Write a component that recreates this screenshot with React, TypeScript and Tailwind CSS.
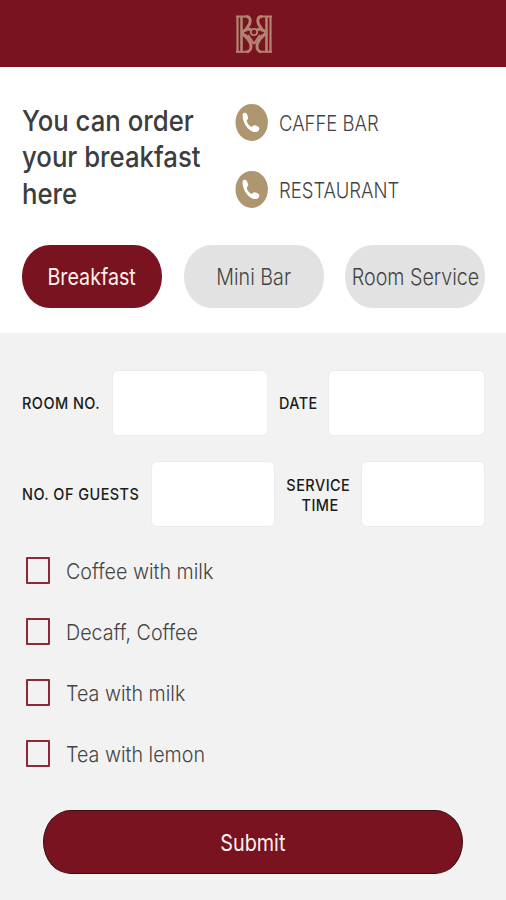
import { useState } from "react";

const contacts = ["CAFFE BAR", "RESTAURANT"];

const tabs = ["Breakfast", "Mini Bar", "Room Service"];

const drinks = ["Coffee with milk", "Decaff, Coffee", "Tea with milk", "Tea with lemon"];

const fieldClass =
  "h-[66px] min-w-0 rounded-[6px] border border-[#ececec] bg-white px-3 text-lg outline-none";

function MonogramHalf() {
  return (
    <>
      <path d="M0 1.500h11M0 36.700h13" strokeWidth="2" />
      <path d="M1.500 1v36.500" strokeWidth="2.200" />
      <path d="M5.500 1v36.500" strokeWidth="2.600" />
      <path d="M10 1.500c4.500 0 5 4 3.500 7.500L9 16" strokeWidth="3" />
      <path d="M6 17l5-3 4 .5M6 18l5 5" strokeWidth="3" />
      <path d="M9 20c3 4 6 7 6 11 0 3-1.500 5.700-4 5.700" strokeWidth="3" />
      <path d="M12 20l6 9" strokeWidth="2.200" />
    </>
  );
}

function Monogram() {
  return (
    <svg width="36" height="39" viewBox="0 0 36 39" fill="none" stroke="#b38472">
      <MonogramHalf />
      <g transform="matrix(-1 0 0 1 36 0)">
        <MonogramHalf />
      </g>
      <circle cx="18" cy="17" r="3.200" strokeWidth="1.800" />
    </svg>
  );
}

function PhoneIcon() {
  return (
    <svg width="33" height="38" viewBox="0 0 33 38" className="shrink-0">
      <ellipse cx="16.700" cy="19.400" rx="16.200" ry="18.500" fill="#ad9670" />
      <path
        d="M7.600 11.500c.2-1.500 1.600-2.200 2.900-1.700 1 .4 1.500 1.300 1.900 2.500l.7 2.300c.3 1.100 0 1.700-.7 2.200-.8.600-.8 1.200-.4 2.100.9 2 2.200 3.500 3.900 4.500.8.500 1.400.5 1.900-.3.600-.9 1.300-1.200 2.300-.8l2.600 1c1.100.5 1.700 1.300 1.600 2.500-.1 1.500-1.200 2.800-2.700 3.100-2.700.6-5.900-.8-8.600-3.500-3.200-3.200-5.700-8.800-5.400-13.900z"
        fill="#fff"
      />
    </svg>
  );
}

export default function App() {
  const [activeTab, setActiveTab] = useState("Breakfast");
  const [selected, setSelected] = useState<string[]>([]);

  const toggle = (name: string) =>
    setSelected((prev) =>
      prev.includes(name) ? prev.filter((item) => item !== name) : [...prev, name],
    );

  return (
    <div className="flex h-[900px] w-[506px] flex-col overflow-hidden bg-white font-['Inter',sans-serif] text-[#444]">
      <header className="flex h-[67px] shrink-0 justify-center bg-[#79131f] pt-[15px] pl-px">
        <Monogram />
      </header>

      <section className="h-[266px] shrink-0 pt-9 pr-[21px] pl-[22px]">
        <div className="flex h-[142px]">
          <h1 className="w-[213px] shrink-0 text-[29px] leading-[36.300px] font-[450] text-[#3d3d3d]">
            <span className="block w-[240px] origin-left scale-x-[0.888]">
              You can order
              <br />
              your breakfast
              <br />
              here
            </span>
          </h1>
          <div className="flex flex-col gap-[29px]">
            {contacts.map((name) => (
              <a key={name} href="#" className="flex h-[38px] items-center gap-[11px]">
                <PhoneIcon />
                <span className="origin-left translate-y-px scale-x-[0.84] text-[22px] font-light">
                  {name}
                </span>
              </a>
            ))}
          </div>
        </div>

        <div className="flex justify-between" role="tablist">
          {tabs.map((tab) => (
            <button
              key={tab}
              type="button"
              role="tab"
              aria-selected={activeTab === tab}
              onClick={() => setActiveTab(tab)}
              className={`flex h-[63px] w-[140px] shrink-0 items-center justify-center rounded-[28px/31px] text-[23px] whitespace-nowrap ${
                activeTab === tab ? "bg-[#79131f] text-[#fff0ee]" : "bg-[#e2e2e2] font-light text-[#444]"
              }`}
            >
              <span className="translate-y-px scale-x-[0.855]">{tab}</span>
            </button>
          ))}
        </div>
      </section>

      <form
        className="flex flex-1 flex-col bg-[#f2f2f2] pt-[37px] pr-[21px] pl-[22px]"
        onSubmit={(e) => e.preventDefault()}
      >
        <div className="flex items-center text-base font-[450] tracking-[0.5px] text-[#1c1c1c]">
          <label htmlFor="room" className="w-[90px] shrink-0 whitespace-nowrap">
            <span className="block origin-left scale-x-[0.905]">ROOM NO.</span>
          </label>
          <input id="room" className={`${fieldClass} w-[156px]`} />
          <label htmlFor="date" className="w-[60px] shrink-0 pl-[11px]">
            <span className="block origin-left scale-x-[0.9]">DATE</span>
          </label>
          <input id="date" className={`${fieldClass} w-[157px]`} />
        </div>

        <div className="mt-[25px] flex items-center text-base font-[450] tracking-[0.5px] text-[#1c1c1c]">
          <label htmlFor="guests" className="w-[129px] shrink-0 whitespace-nowrap">
            <span className="block origin-left scale-x-[0.905]">NO. OF GUESTS</span>
          </label>
          <input id="guests" className={`${fieldClass} w-[124px]`} />
          <label
            htmlFor="time"
            className="flex w-[86px] shrink-0 justify-center text-center leading-5"
          >
            <span className="translate-y-px scale-x-[0.905]">
              SERVICE
              <br />
              <span className="pl-1">TIME</span>
            </span>
          </label>
          <input id="time" className={`${fieldClass} w-[124px]`} />
        </div>

        <div className="mt-[30px] flex flex-col gap-[34px] pl-[4px]">
          {drinks.map((name) => (
            <label key={name} className="flex h-[27px] items-center gap-[16px]">
              <input
                type="checkbox"
                checked={selected.includes(name)}
                onChange={() => toggle(name)}
                className="h-[27px] w-[24px] shrink-0 appearance-none rounded-[1px] border-2 border-[#8f2935] checked:bg-[#79131f]"
              />
              <span className="origin-left translate-y-px scale-x-[0.895] text-[22px] font-light whitespace-nowrap">
                {name}
              </span>
            </label>
          ))}
        </div>

        <button
          type="submit"
          className="mt-[43px] mr-[22px] ml-[21px] flex h-[64px] items-center justify-center rounded-[28px/32px] border border-[#3d0d14] bg-[#79131f] text-[23px] text-[#fff0ee]"
        >
          <span className="translate-y-px scale-x-[0.86]">Submit</span>
        </button>
      </form>
    </div>
  );
}
